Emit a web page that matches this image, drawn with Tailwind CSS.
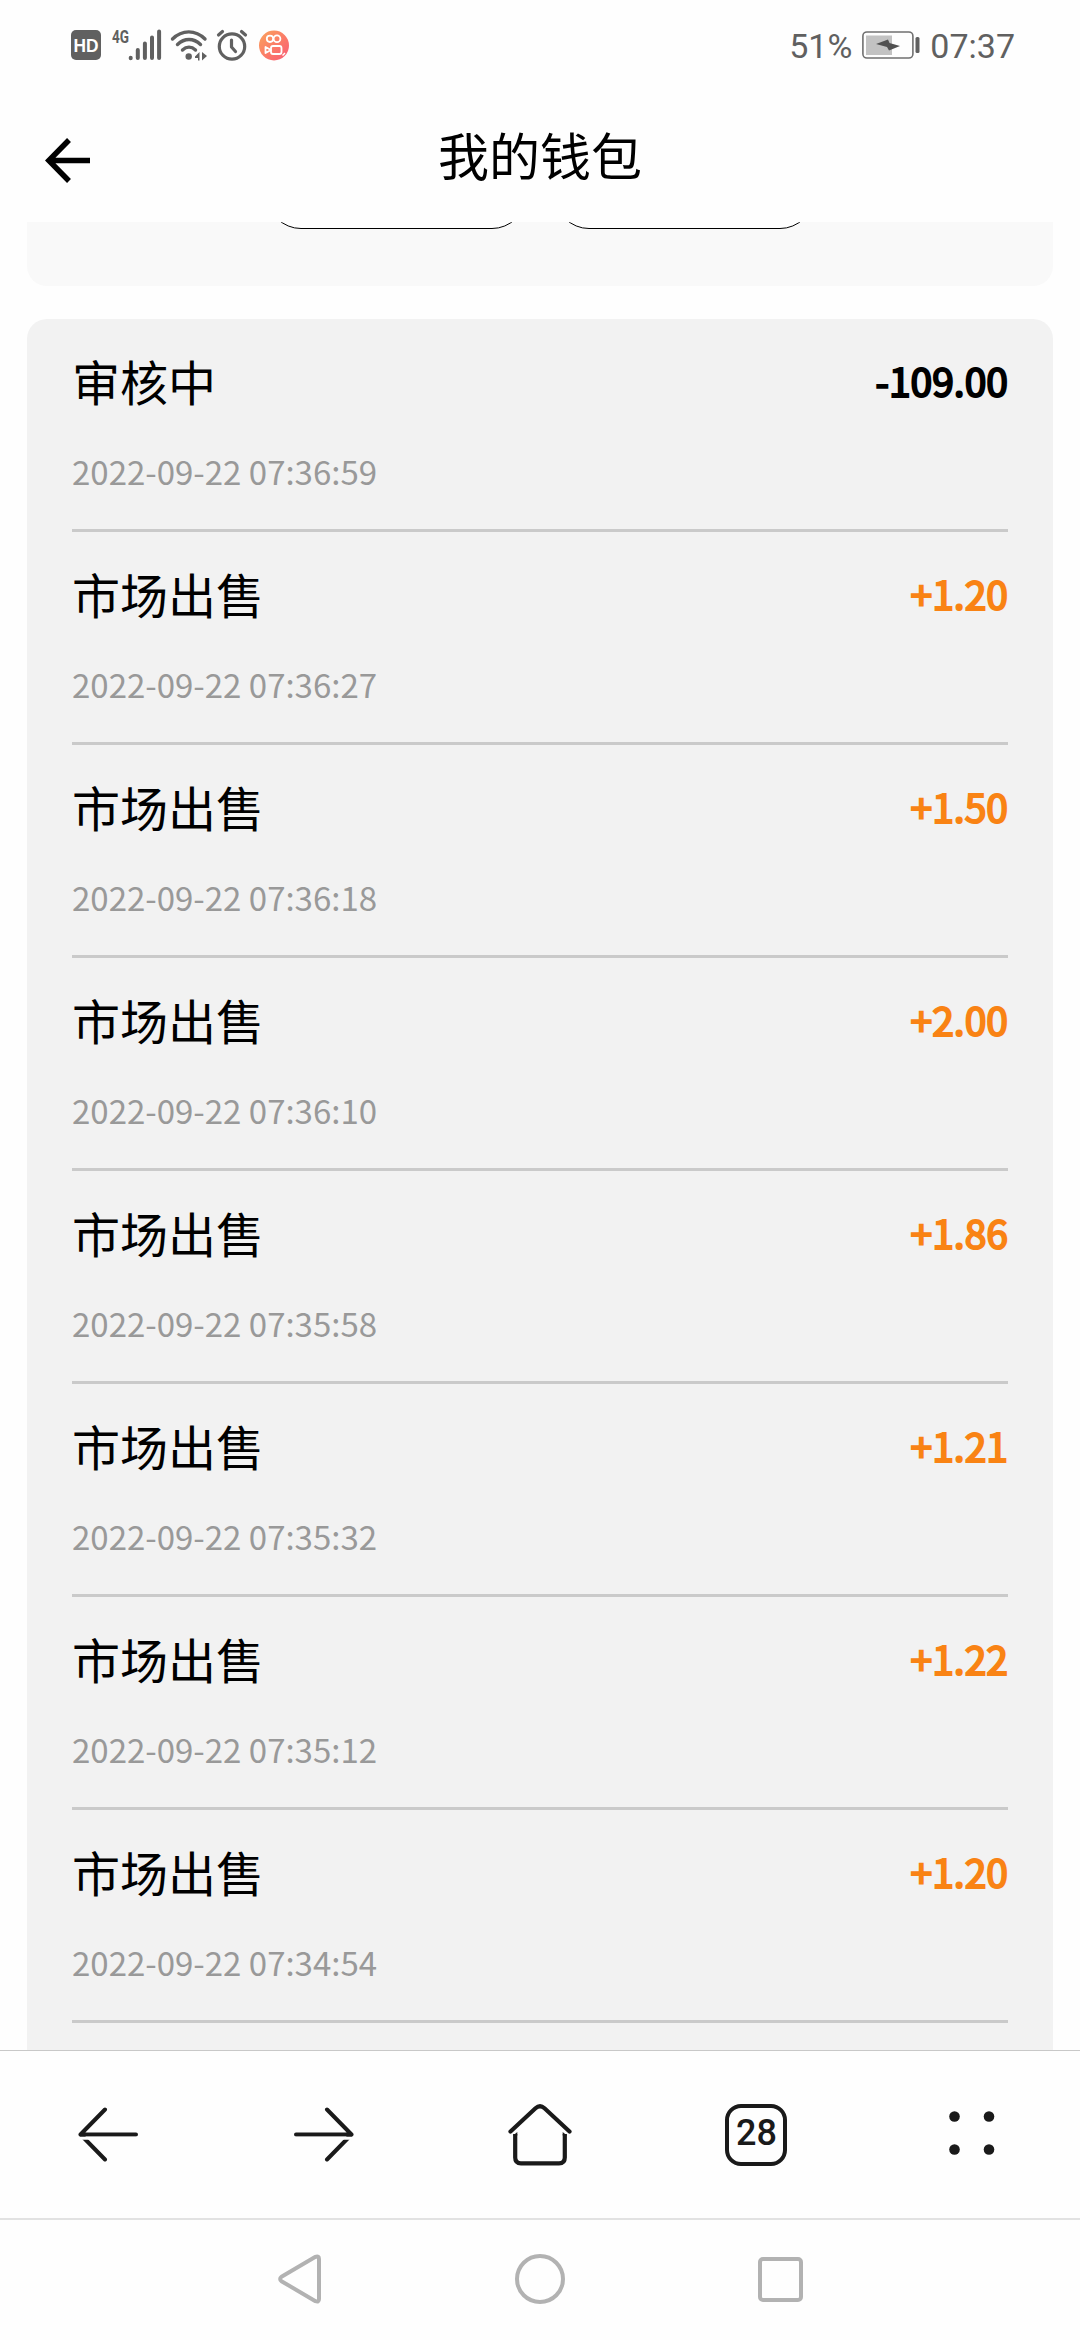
<!DOCTYPE html>
<html lang="zh-CN">
<head>
    <meta charset="UTF-8">
    <meta name="viewport" content="width=device-width, initial-scale=1.0">
    <title>我的钱包</title>
    <script src="https://cdn.jsdelivr.net/npm/@tailwindcss/browser@4"></script>
</head>
<body class="bg-white">
    <div class="w-[1080px] h-[2340px] flex flex-col overflow-hidden bg-[#fefefe] font-['Noto_Sans_CJK_SC',sans-serif]">

        <!-- Status bar -->
        <div class="h-[90px] shrink-0 pl-[71px] pr-[65px] flex items-center justify-between text-[#606060] font-['Roboto',sans-serif]">
            <div class="flex items-center">
                <svg class="w-[30px] h-[30px]" viewBox="0 0 30 30">
                    <rect width="30" height="30" rx="5" fill="#606060"/>
                    <text x="15" y="21.5" text-anchor="middle" font-family="Liberation Sans" font-weight="bold" font-size="18" textLength="25" lengthAdjust="spacingAndGlyphs" fill="#fff">HD</text>
                </svg>
                <svg class="w-[50px] h-[32px] ml-[11px] overflow-visible" viewBox="0 0 50 32">
                    <text x="0" y="13.5" font-family="Roboto" font-weight="bold" font-size="19" textLength="17" lengthAdjust="spacingAndGlyphs" fill="#606060">4G</text>
                    <path d="M18.7 29.2v-.4M25.8 29v-8M32.9 29V14.500M40 29V8.500M47.100 29V2.500" stroke="#606060" stroke-width="4" stroke-linecap="round"/>
                </svg>
                <svg class="w-[38px] h-[32px] ml-[8px]" viewBox="0 0 38 32">
                    <g fill="none" stroke="#606060" stroke-width="3.400" stroke-linecap="round">
                        <path d="M2.500 10C12 0.500 25.500 0.500 35 10"/>
                        <path d="M7.500 15.500C14.500 8.800 23.500 8.800 30.500 15.500"/>
                        <path d="M12.500 21C16.500 17.300 21.500 17.300 25.500 21"/>
                    </g>
                    <circle cx="18.700" cy="27.500" r="3.200" fill="#606060"/>
                    <path d="M25 27.500L29.500 23V31.500H28V29H25ZM32 23L37 27L32 31.500Z" fill="#606060"/>
                </svg>
                <svg class="w-[32px] h-[32px] ml-[8px]" viewBox="0 0 32 32">
                    <g fill="none" stroke="#606060" stroke-width="3.200" stroke-linecap="round" stroke-linejoin="round">
                        <circle cx="16" cy="17.500" r="12.700"/>
                        <path d="M15.500 11v7l4 4.500M2.500 6L6.500 2.500M25.500 2.500L29.500 6"/>
                    </g>
                </svg>
                <svg class="w-[30px] h-[31px] ml-[11px]" viewBox="0 0 30 31">
                    <defs>
                        <linearGradient id="app" x1="0" y1="0" x2="1" y2="1">
                            <stop offset="0" stop-color="#fba45c"/>
                            <stop offset=".55" stop-color="#fb7a68"/>
                            <stop offset="1" stop-color="#f85a78"/>
                        </linearGradient>
                    </defs>
                    <circle cx="15" cy="15.500" r="15" fill="url(#app)"/>
                    <g fill="none" stroke="#fff" stroke-width="1.800" stroke-linejoin="round">
                        <circle cx="11" cy="8.800" r="3.200"/>
                        <circle cx="18" cy="8.800" r="3.400"/>
                        <rect x="12" y="16" width="10.500" height="8" rx="2"/>
                        <path d="M12 20L6.500 17V23Z"/>
                    </g>
                    <path d="M23.500 25.500L26 23" stroke="#fff" stroke-width="1.500"/>
                </svg>
            </div>
            <div class="flex items-center text-[34px] leading-none">
                <span class="pt-[1px]">51%</span>
                <svg class="w-[58px] h-[28px] ml-[10px]" viewBox="0 0 58 28">
                    <rect x=".9" y="1" width="50" height="26" rx="4" fill="none" stroke="#707070" stroke-width="1.600"/>
                    <rect x="4" y="4.500" width="26" height="19.500" fill="#c2c2c2"/>
                    <path d="M14 13L26 8.500L27.500 12L38 15L27 19.500L25 16Z" fill="#505050"/>
                    <rect x="53.500" y="6" width="4" height="16" rx="1.500" fill="#606060"/>
                </svg>
                <span class="pt-[1px] ml-[10px]">07:37</span>
            </div>
        </div>

        <!-- Title bar -->
        <header class="h-[132px] shrink-0 px-[45px] flex items-center justify-between pb-[4px]">
            <svg class="w-[45px] h-[45px] mt-[12px]" viewBox="0 0 45 45" fill="none" stroke="#000" stroke-width="5.500">
                <path d="M24 2L3.800 22.500L24 43M4 22.500H45"/>
            </svg>
            <h1 class="text-[51px] leading-none text-black">我的钱包</h1>
            <div class="w-[45px]"></div>
        </header>

        <!-- Scrolled content -->
        <main class="flex-1 min-h-0 overflow-hidden px-[27px]">
            <div class="h-[64px] rounded-b-[20px] bg-[#f9f9f9] flex justify-center items-start gap-[29px] overflow-hidden">
                <div class="w-[259px] h-[72px] -mt-[65px] rounded-[34px] border border-black bg-[#fefefe]"></div>
                <div class="w-[259px] h-[72px] -mt-[65px] rounded-[34px] border border-black bg-[#fefefe]"></div>
            </div>
            <ul id="records" class="mt-[33px] h-[1800px] rounded-[20px] bg-[#f2f2f2] px-[45px]"></ul>
        </main>

        <!-- Browser toolbar -->
        <nav class="h-[168px] shrink-0 border-t border-[#c8c8c8] grid grid-cols-5 items-center justify-items-center">
            <svg class="w-[60px] h-[55px]" viewBox="0 0 60 55" fill="none" stroke="#1a1a1a" stroke-width="4" stroke-linecap="round" stroke-linejoin="round">
                <path d="M27 2.500L2.500 27.500L27 52.500M2.500 27.500H58"/>
                <path d="M0 31.200H60" stroke="#fefefe" stroke-width="3" stroke-linecap="butt"/>
            </svg>
            <svg class="w-[60px] h-[55px]" viewBox="0 0 60 55" fill="none" stroke="#1a1a1a" stroke-width="4" stroke-linecap="round" stroke-linejoin="round">
                <path d="M33 2.500L57.500 27.500L33 52.500M57.500 27.500H2"/>
                <path d="M0 31.200H60" stroke="#fefefe" stroke-width="3" stroke-linecap="butt"/>
            </svg>
            <svg class="w-[64px] h-[62px]" viewBox="0 0 64 62" fill="none" stroke="#1a1a1a" stroke-width="4.200" stroke-linecap="round" stroke-linejoin="round">
                <path d="M2.500 27.500L27.500 4.300Q32 .3 36.500 4.300L61.500 27.500"/>
                <path d="M7.200 30V53.500Q7.200 59.300 13 59.300H51Q56.800 59.300 56.800 53.500V30" stroke-linecap="butt"/>
                <path d="M5.100 31.500L9.300 28V31.500ZM58.900 31.500L54.700 28V31.500Z" fill="#1a1a1a" stroke="none"/>
            </svg>
            <div class="w-[62px] h-[62px] rounded-[16px] border-[4.500px] border-[#1a1a1a] pb-[3px] pl-[1px] flex items-center justify-center text-[#1a1a1a] text-[36px] leading-none font-medium font-['Roboto',sans-serif]">28</div>
            <svg class="w-[46px] h-[45px] mb-[2px]" viewBox="0 0 46 45" fill="#1a1a1a">
                <circle cx="5.500" cy="5.500" r="5.300"/>
                <circle cx="40" cy="5.500" r="5.300"/>
                <circle cx="5.500" cy="38.500" r="5.300"/>
                <circle cx="40" cy="38.500" r="5.300"/>
            </svg>
        </nav>

        <!-- System navigation -->
        <nav class="h-[122px] shrink-0 border-t-2 border-[#e2e2e2] px-[180px] pb-[2px] grid grid-cols-3 items-center justify-items-center">
            <svg class="w-[44px] h-[50px]" viewBox="0 0 44 50" fill="none" stroke="#b2b2b2" stroke-width="4" stroke-linejoin="round">
                <path d="M37.500 2.800L3.500 22.800Q.8 25 3.500 27.200L37.500 47.200Q41 48.500 41 45V5Q41 1.500 37.500 2.800Z"/>
            </svg>
            <div class="w-[50px] h-[50px] rounded-full border-[4.500px] border-[#b2b2b2]"></div>
            <div class="w-[45px] h-[45px] rounded-[5px] border-[4.500px] border-[#b2b2b2]"></div>
        </nav>
    </div>

    <script>
        const records = [
            { title: "审核中", time: "2022-09-22 07:36:59", amount: "-109.00" },
            { title: "市场出售", time: "2022-09-22 07:36:27", amount: "+1.20" },
            { title: "市场出售", time: "2022-09-22 07:36:18", amount: "+1.50" },
            { title: "市场出售", time: "2022-09-22 07:36:10", amount: "+2.00" },
            { title: "市场出售", time: "2022-09-22 07:35:58", amount: "+1.86" },
            { title: "市场出售", time: "2022-09-22 07:35:32", amount: "+1.21" },
            { title: "市场出售", time: "2022-09-22 07:35:12", amount: "+1.22" },
            { title: "市场出售", time: "2022-09-22 07:34:54", amount: "+1.20" }
        ];

        const list = document.getElementById("records");
        records.forEach(item => {
            const color = item.amount.startsWith("-") ? "text-black" : "text-[#f98314]";
            const row = document.createElement("li");
            row.className = "h-[213px] pt-[25px] border-b-[3px] border-[#cacaca]";
            row.innerHTML = `
                <div class="flex items-center justify-between h-[72px]">
                    <span class="text-[48px] leading-[72px] text-black">${item.title}</span>
                    <span class="text-[39px] leading-[72px] [-webkit-text-stroke:2px_currentColor] ${color}">${item.amount}</span>
                </div>
                <p class="mt-[31px] text-[33px] leading-[48px] text-[#999999]">${item.time}</p>
            `;
            list.appendChild(row);
        });
    </script>
</body>
</html>
